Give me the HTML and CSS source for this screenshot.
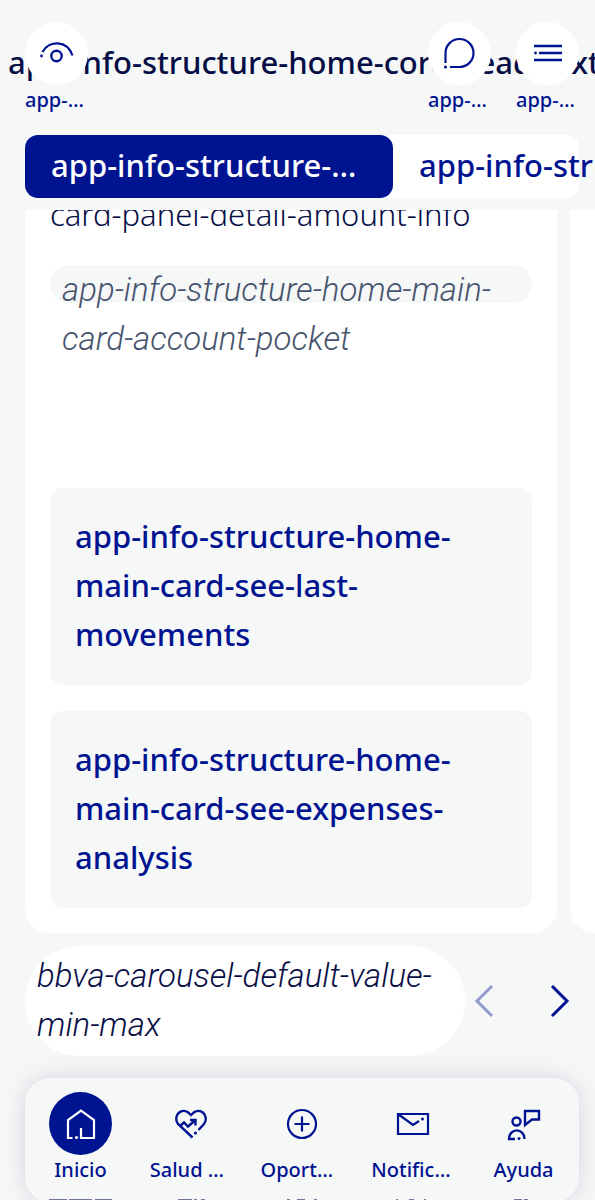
FILE: index.html
```html
<!DOCTYPE html>
<html lang="es">

<head>
    <meta charset="UTF-8">
    <meta name="viewport" content="width=device-width, initial-scale=1.0">
    <title>Inicio</title>
    <link rel="stylesheet" href="styles.css">
</head>

<body>
    <div class="app">
        <header class="header">
            <h1 class="title">app-info-structure-home-core-head-text</h1>
            <div class="actions">
                <button class="action">
                    <span class="circle">
                        <svg width="36" height="36" viewBox="0 0 36 36" fill="none" stroke="currentColor" stroke-width="2.200">
                            <path d="M3.500 16C10 4 28 4 33.500 19.500" />
                            <circle cx="17.500" cy="20" r="5.200" stroke-width="2.400" />
                            <circle cx="2.500" cy="20" r="1.400" fill="currentColor" stroke="none" />
                        </svg>
                    </span>
                    <span class="action-label">app-info</span>
                </button>
                <button class="action push">
                    <span class="circle">
                        <svg width="36" height="36" viewBox="0 0 36 36" fill="none" stroke="currentColor" stroke-width="2.200">
                            <path d="M3.500 27V17A14 14 0 1 1 17.500 31H8" />
                            <circle cx="3.500" cy="31" r="1.600" fill="currentColor" stroke="none" />
                        </svg>
                    </span>
                    <span class="action-label">app-info</span>
                </button>
                <button class="action">
                    <span class="circle">
                        <svg width="36" height="36" viewBox="0 0 36 36" fill="none" stroke="currentColor" stroke-width="2.400">
                            <path d="M4 10H32M9 17H32M4 24H32" />
                            <circle cx="5.500" cy="17" r="1.400" fill="currentColor" stroke="none" />
                        </svg>
                    </span>
                    <span class="action-label">app-info</span>
                </button>
            </div>
        </header>

        <div class="tabs">
            <button class="tab active">app-info-structure-home</button>
            <button class="tab">app-info-structure-home</button>
        </div>

        <main class="carousel">
            <section class="card">
                <p class="detail">card-panel-detail-amount-info</p>
                <div class="pocket">
                    <p class="pocket-text">app-info-structure-home-main-card-account-pocket</p>
                </div>
                <a class="link" href="#">app-info-structure-home-main-card-see-last-movements</a>
                <a class="link" href="#">app-info-structure-home-main-card-see-expenses-analysis</a>
            </section>
            <section class="card next"></section>
        </main>

        <div class="pager">
            <p class="pager-text">bbva-carousel-default-value-min-max</p>
            <button class="arrow" disabled aria-label="Anterior">
                <svg width="20" height="34" viewBox="0 0 20 34" fill="none" stroke="currentColor" stroke-width="3">
                    <path d="M18 2L3 17L18 32" />
                </svg>
            </button>
            <button class="arrow" aria-label="Siguiente">
                <svg width="20" height="34" viewBox="0 0 20 34" fill="none" stroke="currentColor" stroke-width="3">
                    <path d="M2 2L17 17L2 32" />
                </svg>
            </button>
        </div>

        <nav class="nav">
            <a class="nav-item" href="#">
                <span class="nav-icon current">
                    <svg width="36" height="36" viewBox="0 0 36 36" fill="none" stroke="currentColor" stroke-width="2.200">
                        <path d="M9.500 32H5V14L18 4.500L31 14V32H18V22" />
                        <circle cx="13.500" cy="31.500" r="1.600" fill="currentColor" stroke="none" />
                    </svg>
                </span>
                <span class="nav-label">Inicio</span>
                <svg class="edge" width="64" height="1" viewBox="0 0 64 1"><path d="M0 0H18V1H0ZM20 0H43V1H20ZM46 0H63V1H46Z" /></svg>
            </a>
            <a class="nav-item" href="#">
                <span class="nav-icon">
                    <svg width="36" height="36" viewBox="0 0 36 36" fill="none" stroke="currentColor" stroke-width="2.400">
                        <path d="M19.500 31.500L5 18C-1 10 9 -1 18 9C27 -1 37 10 31 18L25.500 24" />
                        <path d="M7 20L11 16.500L15 20.500L22.500 14M17 14H22.500V19.500" />
                        <circle cx="22.500" cy="27" r="1.600" fill="currentColor" stroke="none" />
                    </svg>
                </span>
                <span class="nav-label">Salud financiera</span>
                <svg class="edge" width="64" height="1" viewBox="0 0 64 1"><path d="M19 0H33V1H19ZM35 0H38V1H35ZM42 0H46V1H42Z" /></svg>
            </a>
            <a class="nav-item" href="#">
                <span class="nav-icon">
                    <svg width="36" height="36" viewBox="0 0 36 36" fill="none" stroke="currentColor" stroke-width="2.200">
                        <circle cx="18" cy="18" r="14" />
                        <path d="M18 10.500V25.500M10.500 18H25.500" />
                    </svg>
                </span>
                <span class="nav-label">Oportunidades</span>
                <svg class="edge" width="64" height="1" viewBox="0 0 64 1"><path d="M17 0H20V1H17ZM27 0H35V1H27ZM44 0H47V1H44Z" /></svg>
            </a>
            <a class="nav-item" href="#">
                <span class="nav-icon">
                    <svg width="36" height="36" viewBox="0 0 36 36" fill="none" stroke="currentColor" stroke-width="2.200">
                        <path d="M3 8H33V28H3ZM3 8L18 19L24 15" />
                        <circle cx="27.500" cy="13" r="1.500" fill="currentColor" stroke="none" />
                    </svg>
                </span>
                <span class="nav-label">Notificaciones</span>
                <svg class="edge" width="64" height="1" viewBox="0 0 64 1"><path d="M15 0H17V1H15ZM28 0H33V1H28ZM43 0H45V1H43Z" /></svg>
            </a>
            <a class="nav-item" href="#">
                <span class="nav-icon">
                    <svg width="36" height="36" viewBox="0 0 36 36" fill="none" stroke="currentColor" stroke-width="2.400">
                        <circle cx="10.500" cy="15.500" r="4" />
                        <path d="M9 33H3C3 21.500 18.500 21.500 18.500 33" />
                        <path d="M19 5H33V13.500H26L19 19Z" />
                        <circle cx="13" cy="32.500" r="1.500" fill="currentColor" stroke="none" />
                    </svg>
                </span>
                <span class="nav-label">Ayuda</span>
                <svg class="edge" width="64" height="1" viewBox="0 0 64 1"><path d="M22 0H30V1H22ZM32 0H36V1H32Z" /></svg>
            </a>
        </nav>
    </div>
</body>

</html>
```
FILE: styles.css
```css
*{
    margin: 0;
    padding: 0;
    box-sizing: border-box;
}
body{
    background-color: #f6f8f8;
    color: #070e46;
    font-family: "Noto Sans", "Open Sans", sans-serif;
    font-size: 31px;
    line-height: 49px;
}
button, a{
    font: inherit;
    color: #001391;
    background: none;
    border: none;
    text-decoration: none;
}
.app{
    height: 100vh;
    overflow: hidden;
    display: flex;
    flex-direction: column;
}
.header{
    display: grid;
    padding-top: 22px;
}
.title, .actions{
    grid-area: 1 / 1;
}
.title{
    min-width: 0;
    padding: 16px 0px 0px 8px;
    font-size: 31px;
    font-weight: 500;
    white-space: nowrap;
    overflow: hidden;
}
.actions{
    display: flex;
    gap: 25px;
    padding: 0px 16px 0px 25px;
}
.action{
    width: 63px;
}
.push{
    margin-left: auto;
}
.circle{
    height: 63px;
    display: flex;
    align-items: center;
    justify-content: center;
    border-radius: 50%;
    background-color: white;
}
.action-label, .nav-label{
    display: block;
    font-size: 20px;
    font-weight: 500;
    line-height: 30px;
    white-space: nowrap;
    overflow: hidden;
    text-overflow: ellipsis;
}
.tabs{
    display: flex;
    margin: 20px 16px 0px 25px;
    border-radius: 13px;
    background-color: white;
}
.tab{
    flex: none;
    width: 368px;
    padding: 6px 36px 8px 26px;
    border-radius: 13px;
    text-align: left;
    font-weight: 500;
    white-space: nowrap;
    overflow: hidden;
    text-overflow: ellipsis;
}
.active{
    background-color: #001391;
    color: white;
}
.carousel{
    flex: none;
    margin-top: 12px;
    padding-left: 25px;
    display: flex;
    gap: 13px;
    overflow: hidden;
}
.card{
    flex: none;
    width: calc(100% - 38px);
    padding: 0px 25px 25px;
    border-radius: 0px 0px 25px 25px;
    background-color: white;
}
/* scrolled under the tabs */
.detail{
    margin-top: -20px;
    font-weight: 300;
}
.pocket{
    height: 38px;
    margin: 26px 0px 185px;
    padding: 0px 12px;
    border-radius: 19px;
    background-color: #f6f8f8;
    color: #46536d;
}
.pocket-text, .pager-text{
    font-family: Roboto, "Noto Sans", sans-serif;
    font-size: 33px;
    font-style: italic;
    font-weight: 300;
}
.link{
    display: block;
    padding: 24px 25px 26px;
    border-radius: 13px;
    background-color: #f6f8f8;
    font-weight: 500;
}
.link + .link{
    margin-top: 26px;
}
.pager{
    display: flex;
    align-items: center;
    padding: 13px 25px 0px;
}
.pager-text{
    width: 440px;
    margin-right: auto;
    padding: 5px 12px 7px;
    border-radius: 56px;
    background-color: white;
}
.arrow{
    display: flex;
    margin-left: 56px;
}
.arrow:disabled{
    margin-left: 0px;
    opacity: 0.4;
}
.nav{
    flex: none;
    display: flex;
    justify-content: space-between;
    margin: 22px 16px 0px 25px;
    height: 124px;
    padding: 14px 14px 0px;
    border-radius: 25px;
    background-color: #f6f8f8;
    box-shadow: 0px 0px 25px rgba(7, 14, 70, 0.15);
}
.nav-item{
    width: 83px;
    text-align: center;
}
.nav-icon{
    width: 63px;
    height: 63px;
    margin: 0px auto;
    display: flex;
    align-items: center;
    justify-content: center;
    border-radius: 50%;
}
.current{
    background-color: #001391;
    color: white;
}
.edge{
    display: block;
    margin: 14px auto 0px;
    fill: #74749f;
}
```
